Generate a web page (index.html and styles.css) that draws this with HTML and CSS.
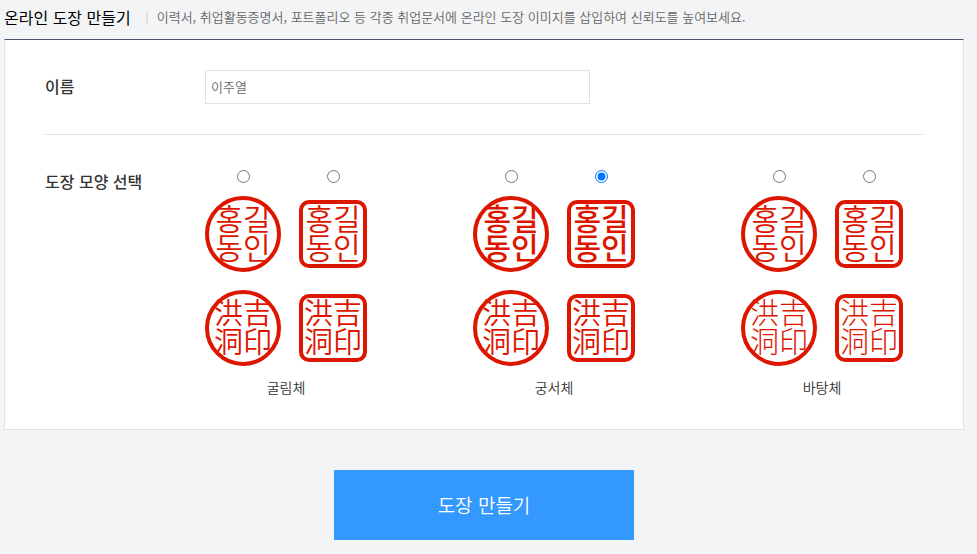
FILE: index.html
```html
<!DOCTYPE html>
<html lang="ko">
<head>
    <meta charset="UTF-8">
    <meta name="viewport" content="width=device-width, initial-scale=1.0">
    <title>온라인 도장 만들기</title>
    <link rel="stylesheet" href="styles.css">
</head>
<body>
    <div class="container">
        <header class="page-header">
            <h1>온라인 도장 만들기</h1>
            <p>이력서, 취업활동증명서, 포트폴리오 등 각종 취업문서에 온라인 도장 이미지를 삽입하여 신뢰도를 높여보세요.</p>
        </header>

        <form id="stampForm">
            <div class="panel">
                <div class="form-row">
                    <label class="row-title" for="name">이름</label>
                    <input type="text" id="name" name="name" value="이주열">
                </div>

                <div class="form-row" role="radiogroup" aria-labelledby="shapeTitle">
                    <span class="row-title" id="shapeTitle">도장 모양 선택</span>
                    <div class="fonts">
                        <div class="font-group gulim">
                            <label class="option">
                                <input type="radio" name="shape" value="gulim-circle">
                                <span class="stamp circle">홍길<br>동인</span>
                                <span class="stamp circle hanja">洪吉<br>洞印</span>
                            </label>
                            <label class="option">
                                <input type="radio" name="shape" value="gulim-square">
                                <span class="stamp square">홍길<br>동인</span>
                                <span class="stamp square hanja">洪吉<br>洞印</span>
                            </label>
                            <span class="font-name">굴림체</span>
                        </div>
                        <div class="font-group gungseo">
                            <label class="option">
                                <input type="radio" name="shape" value="gungseo-circle">
                                <span class="stamp circle">홍길<br>동인</span>
                                <span class="stamp circle hanja">洪吉<br>洞印</span>
                            </label>
                            <label class="option">
                                <input type="radio" name="shape" value="gungseo-square" checked>
                                <span class="stamp square">홍길<br>동인</span>
                                <span class="stamp square hanja">洪吉<br>洞印</span>
                            </label>
                            <span class="font-name">궁서체</span>
                        </div>
                        <div class="font-group batang">
                            <label class="option">
                                <input type="radio" name="shape" value="batang-circle">
                                <span class="stamp circle">홍길<br>동인</span>
                                <span class="stamp circle hanja">洪吉<br>洞印</span>
                            </label>
                            <label class="option">
                                <input type="radio" name="shape" value="batang-square">
                                <span class="stamp square">홍길<br>동인</span>
                                <span class="stamp square hanja">洪吉<br>洞印</span>
                            </label>
                            <span class="font-name">바탕체</span>
                        </div>
                    </div>
                </div>
            </div>

            <button type="submit">도장 만들기</button>
        </form>
    </div>
</body>
</html>
```
FILE: styles.css
```css
* {
    box-sizing: border-box;
}
body {
    margin: 0;
    padding: 0 13px 15px 4px;
    background-color: #f3f4f6;
    color: #333;
    font-family: "Noto Sans CJK KR", sans-serif;
    font-size: 14px;
}
.page-header {
    display: flex;
    align-items: center;
    padding: 5px 0 10px;
    line-height: 24px;
}
h1 {
    margin: 0;
    color: #000;
    font-size: 16px;
    font-weight: 400;
}
.page-header p {
    display: flex;
    align-items: center;
    margin: 0;
    color: #666;
    font-size: 13px;
    font-weight: 350;
}
.page-header p::before {
    content: "";
    width: 2px;
    height: 13px;
    margin: 0 9px 0 15px;
    background-color: #e0e1e3;
}
.panel {
    padding: 0 40px;
    background-color: white;
    border: 1px solid #e1e1e1;
    border-top-color: #4a5670;
}
.form-row {
    display: flex;
    align-items: flex-start;
    padding: 30px 0;
}
.form-row + .form-row {
    border-top: 1px solid #e1e1e1;
}
.row-title {
    flex: 0 0 160px;
    font-size: 16px;
    font-weight: 500;
    line-height: 32px;
}
input[type="text"] {
    flex: 0 1 385px;
    min-width: 0;
    height: 34px;
    padding: 0 5px 2px;
    border: 1px solid #e1e1e1;
    background-color: white;
    color: #666;
    font-family: inherit;
    font-size: 13px;
    font-weight: 350;
}
.fonts {
    flex: 1;
    display: grid;
    grid-template-columns: repeat(3, 1fr);
    gap: 86px;
    padding-top: 5px;
}
.font-group {
    display: grid;
    grid-template-columns: 76px 68px;
    gap: 9px 18px;
}
.option {
    display: grid;
    grid-template-rows: 26px 76px 76px;
    justify-items: center;
    align-items: center;
    cursor: pointer;
}
.option input {
    align-self: start;
    margin: 0;
}
.option .hanja {
    margin-top: 18px;
}
.option {
    grid-template-rows: 26px 76px 94px;
}
.font-name {
    grid-column: 1 / 3;
    line-height: 24px;
    text-align: center;
    font-weight: 350;
}
.stamp {
    display: flex;
    align-items: center;
    justify-content: center;
    padding-bottom: 5px;
    border: 4px solid #dd1600;
    color: #dd1600;
    font-size: 30px;
    line-height: 29px;
}
.circle {
    width: 76px;
    height: 76px;
    border-radius: 50%;
}
.square {
    width: 68px;
    height: 68px;
    border-radius: 10px;
}
.hanja {
    font-size: 29px;
}
.gulim .stamp {
    font-weight: 350;
}
.gungseo .stamp {
    font-weight: 500;
}
.gungseo .hanja {
    font-weight: 350;
}
.batang .stamp {
    font-weight: 350;
}
.batang .hanja {
    font-weight: 300;
}
button {
    display: block;
    width: 300px;
    max-width: 100%;
    height: 70px;
    margin: 40px auto 0;
    padding: 0 0 2px;
    border: none;
    background-color: #3399ff;
    color: white;
    font-family: inherit;
    font-size: 19px;
    font-weight: 350;
    cursor: pointer;
}
button:hover {
    background-color: #2288ee;
}
```
